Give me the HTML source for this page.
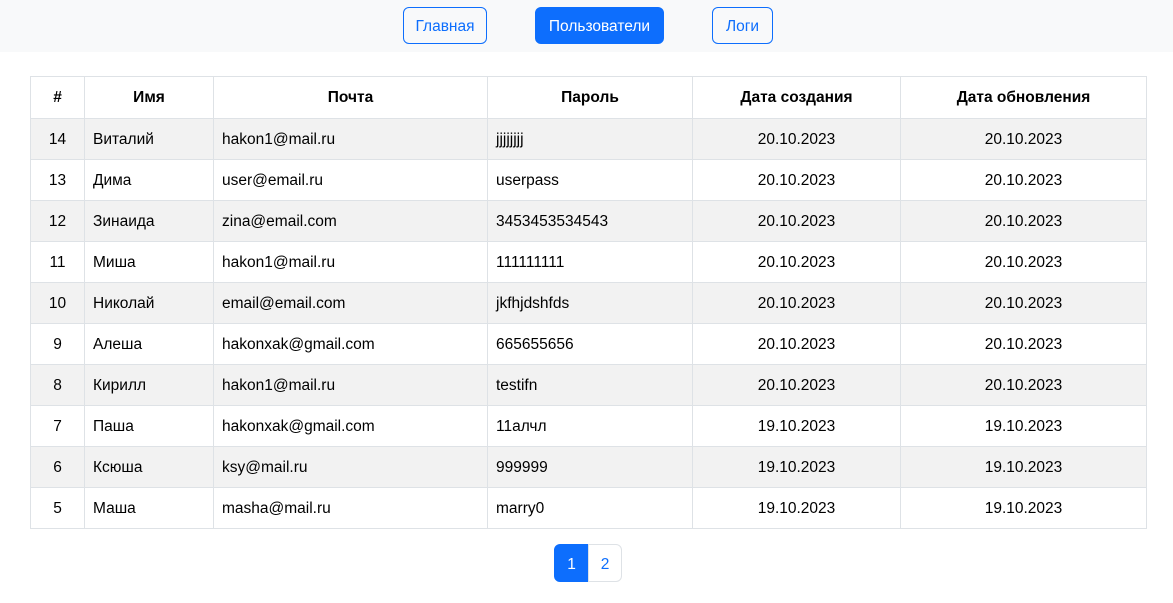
<!DOCTYPE html>
<html><head><meta charset="utf-8"><style>
*{box-sizing:border-box;margin:0;padding:0}
body{width:1173px;height:603px;background:#fff;font-family:"Liberation Sans",sans-serif;font-size:15.5px;color:#000;overflow:hidden;position:relative}
.top{position:absolute;left:0;top:0;width:1173px;height:52px;background:#f8f9fa}
.btn{position:absolute;top:7px;height:37px;border:1px solid #0d6efd;border-radius:6px;color:#0d6efd;font-size:15.5px;line-height:38px;text-align:center}
.btn.a{background:#0d6efd;color:#fff}
table{position:absolute;left:30px;top:76px;border-collapse:collapse;table-layout:fixed}
td,th{border:1px solid #dee2e6;height:41px;padding:2px 8px 0;font-size:15.5px}
th{height:41.5px;font-weight:bold;text-align:center}
tr.s td{background:#f2f2f2}
td.c{text-align:center}
.pg{position:absolute;top:544px;height:38px;line-height:39px;text-align:center;font-size:15.5px;border:1px solid #dee2e6;color:#0d6efd}
</style></head><body>
<div class="top">
<div class="btn" style="left:403px;width:84px">Главная</div>
<div class="btn a" style="left:535px;width:129px">Пользователи</div>
<div class="btn" style="left:712px;width:61px">Логи</div>
</div>
<table>
<colgroup><col style="width:54px"><col style="width:129px"><col style="width:274px"><col style="width:205px"><col style="width:208px"><col style="width:246px"></colgroup>
<tr><th>#</th><th>Имя</th><th>Почта</th><th>Пароль</th><th>Дата создания</th><th>Дата обновления</th></tr>
<tr class="s"><td class="c">14</td><td>Виталий</td><td>hakon1@mail.ru</td><td>jjjjjjjj</td><td class="c">20.10.2023</td><td class="c">20.10.2023</td></tr>
<tr><td class="c">13</td><td>Дима</td><td>user@email.ru</td><td>userpass</td><td class="c">20.10.2023</td><td class="c">20.10.2023</td></tr>
<tr class="s"><td class="c">12</td><td>Зинаида</td><td>zina@email.com</td><td>3453453534543</td><td class="c">20.10.2023</td><td class="c">20.10.2023</td></tr>
<tr><td class="c">11</td><td>Миша</td><td>hakon1@mail.ru</td><td>111111111</td><td class="c">20.10.2023</td><td class="c">20.10.2023</td></tr>
<tr class="s"><td class="c">10</td><td>Николай</td><td>email@email.com</td><td>jkfhjdshfds</td><td class="c">20.10.2023</td><td class="c">20.10.2023</td></tr>
<tr><td class="c">9</td><td>Алеша</td><td>hakonxak@gmail.com</td><td>665655656</td><td class="c">20.10.2023</td><td class="c">20.10.2023</td></tr>
<tr class="s"><td class="c">8</td><td>Кирилл</td><td>hakon1@mail.ru</td><td>testifn</td><td class="c">20.10.2023</td><td class="c">20.10.2023</td></tr>
<tr><td class="c">7</td><td>Паша</td><td>hakonxak@gmail.com</td><td>11алчл</td><td class="c">19.10.2023</td><td class="c">19.10.2023</td></tr>
<tr class="s"><td class="c">6</td><td>Ксюша</td><td>ksy@mail.ru</td><td>999999</td><td class="c">19.10.2023</td><td class="c">19.10.2023</td></tr>
<tr><td class="c">5</td><td>Маша</td><td>masha@mail.ru</td><td>marry0</td><td class="c">19.10.2023</td><td class="c">19.10.2023</td></tr>
</table>
<div class="pg" style="left:554px;width:35px;background:#0d6efd;border-color:#0d6efd;color:#fff;border-radius:6px 0 0 6px">1</div>
<div class="pg" style="left:588px;width:34px;border-radius:0 6px 6px 0">2</div>
</body></html>
